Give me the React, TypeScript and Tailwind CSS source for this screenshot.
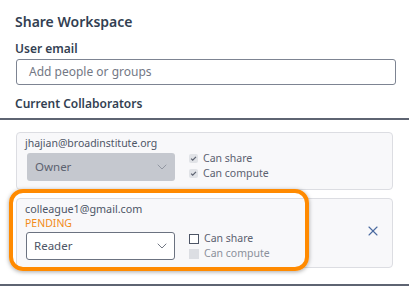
import { ChevronDown, X } from "lucide-react";

const font = { fontFamily: '"Noto Sans", "Open Sans", sans-serif' };

function CheckRow({ label, checked, disabled }: { label: string; checked?: boolean; disabled?: boolean }) {
  return (
    <div className="flex items-center gap-[5px] h-[15px]">
      {checked ? (
        <span className="w-[9px] h-[9px] rounded-[2px] bg-[#e1e3e7] flex items-center justify-center">
          <svg width="7" height="7" viewBox="0 0 8 8" fill="none">
            <path d="M1.3 4.2 3.1 6 6.8 2.2" stroke="#5c6270" strokeWidth="1.4" />
          </svg>
        </span>
      ) : disabled ? (
        <span className="w-[10px] h-[10px] bg-[#dcdee3]" />
      ) : (
        <span className="w-[10px] h-[10px] border border-[#4d5566] bg-white" />
      )}
      <span className={`text-[10.5px] ${disabled ? "text-[#8b909b]" : "text-[#5b6170]"}`}>{label}</span>
    </div>
  );
}

export default function App() {
  return (
    <div className="w-[409px] h-[286px] bg-white relative overflow-hidden text-[#333f52]" style={font}>
      <div className="px-[15px] pt-[12px]">
        <h2 className="text-[14px] font-semibold leading-[20px]">Share Workspace</h2>
        <label className="block mt-[9px] text-[12px] font-semibold leading-[16px]">User email</label>
        <div className="mt-[2px] ml-px w-[380px] h-[26px] border border-[#7d8492] rounded-[3px] flex items-center px-[12px] text-[12px] text-[#737885]">
          Add people or groups
        </div>
        <div className="mt-[11px] text-[12px] font-semibold leading-[16px]">Current Collaborators</div>
      </div>
      <div className="mt-[6px] h-[2px] bg-[#5e6472]" />

      <div className="px-[16px] mt-[12px] flex flex-col gap-[8px]">
        <div className="h-[58px] shrink-0 rounded-[4px] border border-[#dcdde2] bg-[#f8f8fa] px-[8px] pt-[3px]">
          <div className="text-[10.5px] leading-[15px] text-[#4d5566]">jhajian@broadinstitute.org</div>
          <div className="flex items-start mt-[2px]">
            <div className="ml-[2px] w-[148px] h-[28px] rounded-[3px] bg-[#c5c8cf] flex items-center justify-between pl-[8px] pr-[5px]">
              <span className="text-[11.5px] text-[#5c6270]">Owner</span>
              <ChevronDown size={16} strokeWidth={1.3} className="text-[#8a8f9a]" />
            </div>
            <div className="ml-[14px] -mt-[2px] flex flex-col">
              <CheckRow label="Can share" checked />
              <CheckRow label="Can compute" checked />
            </div>
          </div>
        </div>

        <div className="h-[70px] shrink-0 rounded-[4px] border border-[#dcdde2] bg-[#f8f8fa] pl-[8px] pt-[3px] flex">
          <div className="flex-1">
            <div className="text-[10.75px] leading-[14px] text-[#4d5566]">colleague1@gmail.com</div>
            <div className="text-[10.5px] leading-[14px] text-[#f28c1a]">PENDING</div>
            <div className="flex items-start mt-[2px]">
              <div className="ml-[1px] w-[149px] h-[28px] rounded-[3px] bg-white border border-[#6b7280] flex items-center justify-between pl-[7px] pr-[4px]">
                <span className="text-[11.5px] text-[#4d5566]">Reader</span>
                <ChevronDown size={16} strokeWidth={1.3} className="text-[#5c6270]" />
              </div>
              <div className="ml-[14px] -mt-[1px] flex flex-col">
                <CheckRow label="Can share" />
                <CheckRow label="Can compute" disabled />
              </div>
            </div>
          </div>
          <div className="flex items-center pr-[11px] pb-[7px]">
            <X size={16} strokeWidth={1.6} className="text-[#4a6aa0]" />
          </div>
        </div>
      </div>

      <div className="absolute left-[9px] top-[189px] w-[300px] h-[82px] rounded-[14px] border-[4px] border-[#ff8a00] shadow-[0_1px_4px_rgba(0,0,0,0.35)]" />

      <div className="absolute left-0 right-0 bottom-0 h-[2px] bg-[#5e6472]" />
    </div>
  );
}
